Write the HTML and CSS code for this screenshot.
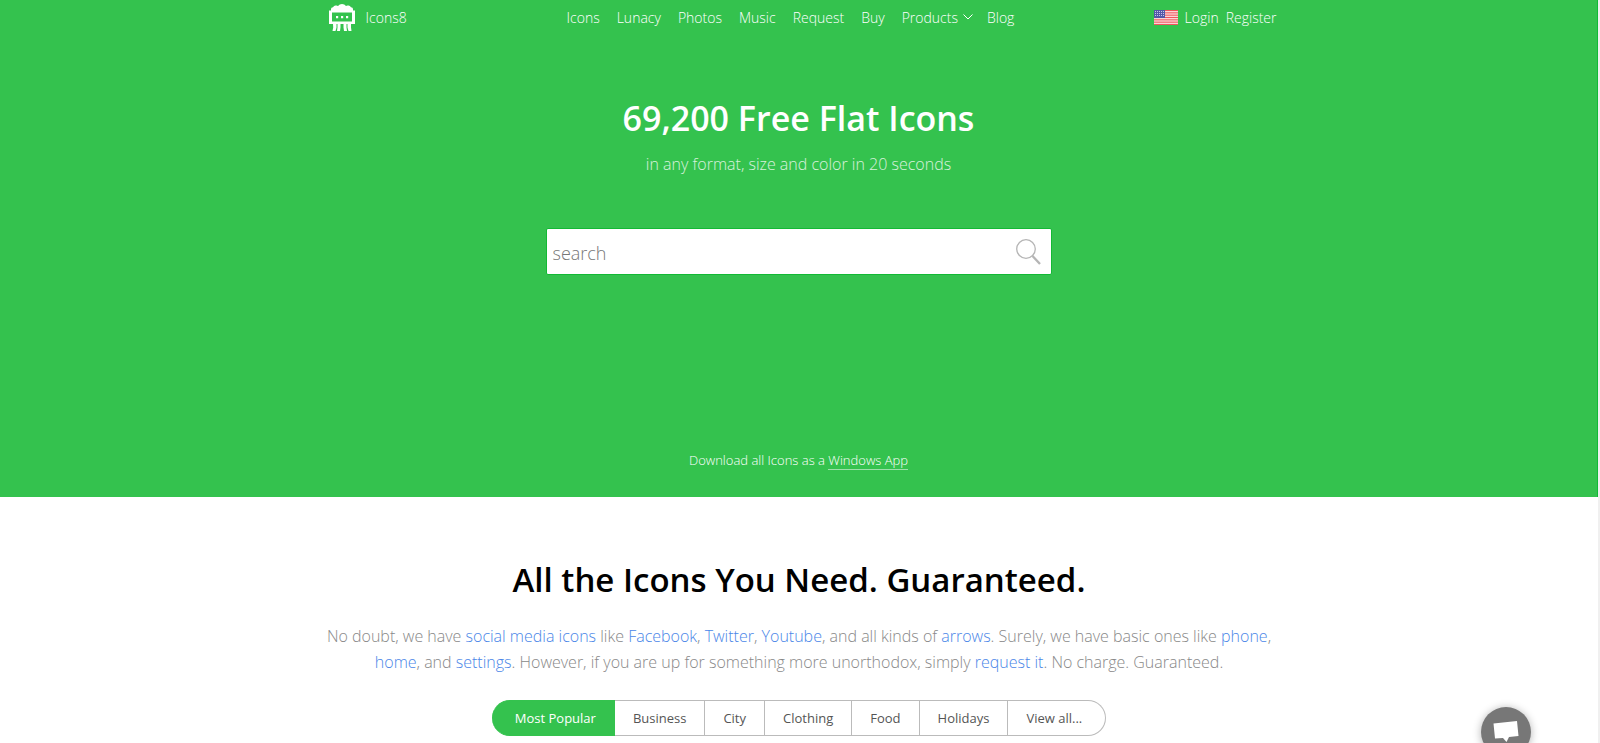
FILE: index.html
```html
<!DOCTYPE html>
<html lang="en">
<head>
    <meta charset="UTF-8">
    <meta name="viewport" content="width=device-width, initial-scale=1.0">
    <title>Icons8 - Free Flat Icons</title>
    <link rel="stylesheet" href="styles.css">
</head>
<body>
    <div class="hero">
        <header class="header">
            <a class="logo" href="#">
                <svg width="26" height="27" viewBox="0 0 26 27" fill="#fff">
                    <path fill-rule="evenodd" d="M2 6.500V5Q2 3.500 4 3.200Q5 1.200 7 1.500Q8 1.300 9 2Q10.500 0 13 0Q15.500 0 17 2Q18 1.300 19 1.500Q21 1.200 22 3.200Q24 3.500 24 5V6.500H26V20H0V6.500ZM3 8.500V17.500H23V8.500Z"/>
                    <path d="M4 20h3.500v3.500l-1 3.500H3.500L4.200 23.500zM8.500 20h3v3.500L11 27H8L8.500 23.500zM14.500 20h3v3.500L18 27h-3L14.500 23.500zM18.500 20H22v3.500l.5 3.500h-3L18.500 23.500z"/>
                    <path d="M7 12h2.200v2.200H7zM12 12h2.200v2.200H12zM17 12h2.200v2.200H17z"/>
                </svg>
                <span>Icons8</span>
            </a>
            <nav class="menu">
                <a href="#">Icons</a>
                <a href="#">Lunacy</a>
                <a href="#">Photos</a>
                <a href="#">Music</a>
                <a href="#">Request</a>
                <a href="#">Buy</a>
                <a class="products" href="#">Products
                    <svg width="10" height="6" viewBox="0 0 10 6" fill="none" stroke="#fff"><path d="M.5.5L5 5L9.500.5"/></svg>
                </a>
                <a href="#">Blog</a>
            </nav>
            <div class="user">
                <svg width="24" height="15" viewBox="0 0 24 15">
                    <path fill="#fff" d="M0 0h24v15H0z"/>
                    <path stroke="#f0555c" stroke-width="1.300" d="M0 .6h24M0 2.900h24M0 5.200h24M0 7.500h24M0 9.800h24M0 12.100h24M0 14.400h24"/>
                    <path fill="#5558a8" d="M0 0h11v8H0z"/>
                    <path stroke="#c5c6e6" stroke-dasharray="1 1" d="M1 1.500h9M1 3.500h9M1 5.500h9"/>
                </svg>
                <a href="#">Login</a>
                <a href="#">Register</a>
            </div>
        </header>

        <h1>69,200 Free Flat Icons</h1>
        <p class="subtitle">in any format, size and color in 20 seconds</p>

        <form class="search">
            <input type="text" placeholder="search" aria-label="search">
            <button type="submit" aria-label="Find icons">
                <svg width="25" height="26" viewBox="0 0 25 26" fill="none" stroke="#b5b5b5">
                    <circle cx="10" cy="10" r="9.300" stroke-width="1.300"/>
                    <path d="M16.500 17L24 25" stroke-width="2.300"/>
                </svg>
            </button>
        </form>

        <p class="download">Download all Icons as a <a href="#">Windows App</a></p>
    </div>

    <main class="content">
        <h2>All the Icons You Need. Guaranteed.</h2>
        <p class="text">No doubt, we have <a href="#">social media icons</a> like <a href="#">Facebook</a>, <a href="#">Twitter</a>, <a href="#">Youtube</a>, and all kinds of <a href="#">arrows</a>. Surely, we have basic ones like <a href="#">phone</a>, <a href="#">home</a>, and <a href="#">settings</a>. However, if you are up for something more unorthodox, simply <a href="#">request it</a>. No charge. Guaranteed.</p>

        <div class="tabs">
            <button class="active">Most Popular</button>
            <button>Business</button>
            <button>City</button>
            <button>Clothing</button>
            <button>Food</button>
            <button>Holidays</button>
            <button>View all...</button>
        </div>
    </main>

    <button class="chat" aria-label="Chat">
        <svg width="26" height="22" viewBox="0 0 26 22" fill="#fff"><path d="M.5 2.500L24 0L25.500 15L16 16L13.500 21L10 17L2 17.500Z"/></svg>
    </button>
</body>
</html>
```
FILE: styles.css
```css
* {
    box-sizing: border-box;
}
body {
    font-family: "Segoe UI", "Open Sans", "Noto Sans", sans-serif;
    font-size: 14px;
    background-color: white;
    color: black;
    margin: 0;
    min-height: 100vh;
    border-right: 2px solid #f0f0f0;
}
a {
    text-decoration: none;
}
h1, h2, p {
    margin: 0;
}
button {
    font-family: inherit;
    cursor: pointer;
}
.hero {
    background-color: #34c24e;
    border-right: 1px solid #0fbb36;
    color: white;
    text-align: center;
    padding-bottom: 28px;
}
.header {
    max-width: 956px;
    height: 34px;
    margin: 0 auto;
    display: grid;
    grid-template-columns: 246px 1fr auto;
    align-items: center;
}
.header a {
    color: white;
}
.logo {
    display: flex;
    align-items: center;
    gap: 11px;
    padding-left: 8px;
}
.menu {
    display: flex;
    gap: 17px;
}
.products {
    display: flex;
    align-items: center;
    gap: 5px;
    margin-right: -3px;
}
.user {
    display: flex;
    align-items: center;
    justify-content: flex-end;
    gap: 7px;
}
.logo, .menu, .user, .download {
    font-weight: 300;
}
h1 {
    font-size: 34px;
    font-weight: 600;
    line-height: 48px;
    margin-top: 60px;
}
.subtitle {
    font-size: 16px;
    font-weight: 300;
    line-height: 24px;
    margin-top: 10px;
    opacity: 0.8;
}
.search {
    max-width: 506px;
    height: 47px;
    margin: 52px auto 0;
    display: flex;
    background-color: white;
    border: 1px solid #12b934;
    border-radius: 2px;
}
.search input {
    flex: 1;
    min-width: 0;
    border: none;
    background: none;
    outline: none;
    padding: 3px 6px 0;
    font-family: inherit;
    font-size: 18px;
    font-weight: 300;
}
.search input::placeholder {
    color: #777;
}
.search button {
    border: none;
    background: none;
    padding: 0 10px;
    display: flex;
    align-items: center;
}
.download {
    font-size: 13px;
    line-height: 18px;
    margin-top: 176px;
}
.download a {
    color: white;
    border-bottom: 1px solid #9ce0a9;
}
.content {
    text-align: center;
    padding: 57px 16px 0;
}
h2 {
    font-size: 33px;
    font-weight: 600;
    line-height: 52px;
}
.text {
    max-width: 948px;
    margin: 17px auto 0;
    font-size: 16px;
    font-weight: 300;
    line-height: 26px;
    color: #888;
}
.text a {
    color: #4a86e8;
}
.tabs {
    display: inline-flex;
    margin-top: 25px;
}
.tabs button {
    height: 36px;
    padding: 0 18px;
    font-size: 13px;
    color: #555;
    background-color: white;
    border: 1px solid #bbb;
    border-left: none;
}
.tabs button:last-child {
    padding-right: 23px;
    border-radius: 0 18px 18px 0;
}
.tabs .active {
    padding-left: 23px;
    color: white;
    background-color: #34c24e;
    border-color: #34c24e;
    border-radius: 18px 0 0 18px;
}
.chat {
    position: fixed;
    right: 69px;
    bottom: -14px;
    width: 50px;
    height: 50px;
    border: none;
    border-radius: 50%;
    background-color: #777;
    box-shadow: 0 1px 8px rgba(0, 0, 0, 0.3);
    padding: 0;
    display: flex;
    align-items: center;
    justify-content: center;
}
```
